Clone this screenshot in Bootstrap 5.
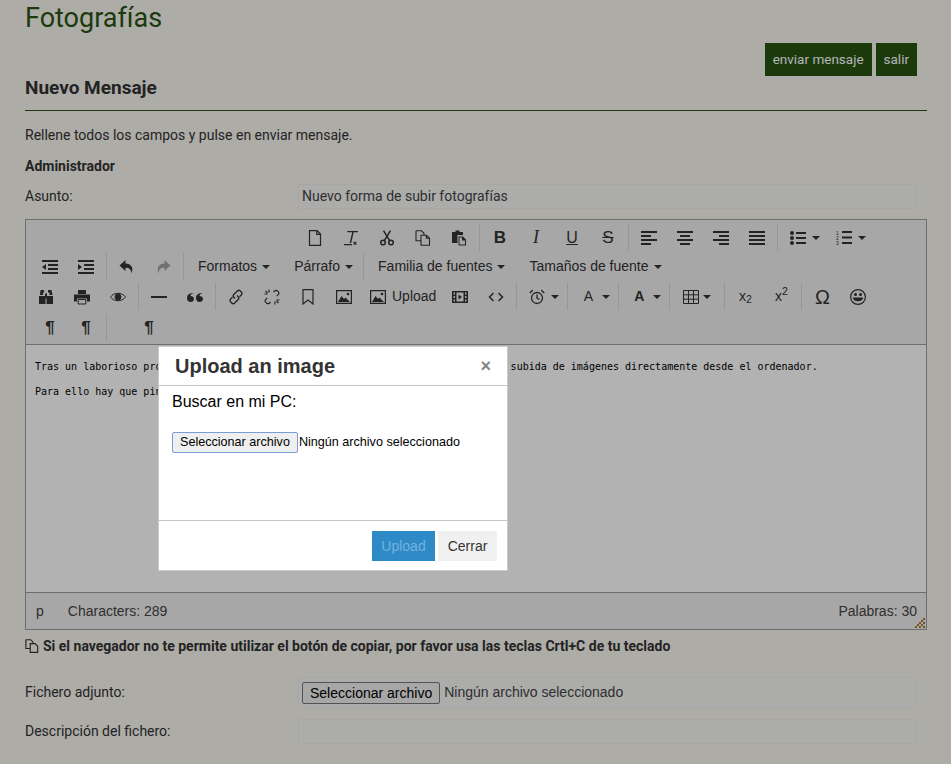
<!DOCTYPE html>
<html lang="es">
<head>
    <meta charset="UTF-8">
    <title>Fotografías | Nuevo Mensaje</title>
    <link href="https://cdn.jsdelivr.net/npm/bootstrap@5.3.2/dist/css/bootstrap.min.css" rel="stylesheet">
    <style>
        html, body { height: 764px; overflow: hidden; }
        body { background: #f8f6f0; font-family: Roboto, sans-serif; font-size: 14px; color: #333; }
        .pagina { padding: 0 24px 0 25px; }
        .titulo { font-size: 27px; font-weight: 400; color: #2a5414; line-height: 36px; margin: 0; }
        .acciones { height: 33px; margin: 7px 10px 0 0; }
        .boton-verde { background: #265412; color: #fff; border: 0; border-radius: 0; font-size: 13.5px; padding: 0 8px; height: 33px; }
        .subtitulo { font-size: 19px; font-weight: 700; line-height: 24px; margin: 0; padding: 0 0 10px; border-bottom: 1px solid #265412; margin-top: 0; }
        .aviso { margin: 14px 0 0; line-height: 20px; }
        .autor { margin: 11px 0 0; line-height: 20px; font-weight: 700; }
        .fila { margin-right: 10px; }
        .fila label { width: 273px; flex: none; }
        .campo { background: #f7f7f5; border: 1px solid #f0f0ee; flex: 1; height: 25px; line-height: 23px; padding: 0 3px; color: #444; }
        .editor { border: 1px solid #9e9e9e; background: #f0f0f0; margin-top: 10px; height: 411px; }
        .barra { height: 124px; padding-top: 4px; }
        .tira { height: 31px; align-items: center; }
        .tira-uno { padding-left: 271px; height: 27px; }
        .tira-dos { height: 30px; padding-top: 1px; }
        .grupo { display: flex; align-items: center; padding: 0 2px; height: 27px; border-left: 1px solid #d9d9d9; }
        .grupo:first-child { border-left: 0; }
        .tira-uno .grupo:first-child { padding-left: 0; }
        .btn-mce { width: 36px; height: 26px; display: flex; align-items: center; justify-content: center; color: #333; flex: none; font-family: "Liberation Sans", sans-serif; font-size: 14px; }
        .btn-mce svg { display: block; }
        .btn-mce.apagado { color: #a3a3a3; }
        .btn-ancho { width: 42px; justify-content: flex-start; padding-left: 8px; }
        .menu-mce { font-family: "Liberation Sans", sans-serif; font-size: 14px; color: #333; padding: 0 8px 0 12px; display: flex; align-items: center; gap: 4px; height: 26px; white-space: nowrap; }
        .flecha { display: inline-block; width: 0; height: 0; border: 4px solid transparent; border-top-color: #333; border-bottom: 0; margin-left: 1px; }
        .flecha-sola { margin-left: -4px; margin-right: 6px; }
        .letra-b { font-weight: 700; font-size: 17px; }
        .letra-i { font-style: italic; font-size: 18px; font-family: "Liberation Serif", serif; }
        .letra-u { font-size: 16px; text-decoration: underline; }
        .letra-s { font-size: 17px; text-decoration: line-through; }
        .area { background: #fff; height: 249px; border-top: 1px solid #9e9e9e; border-bottom: 1px solid #9e9e9e; padding: 15px 9px; font-family: "DejaVu Sans Mono", monospace; font-size: 10px; color: #000; }
        .area p { margin: 0 0 12px; line-height: 13px; }
        .estado { height: 36px; padding: 0 9px 0 10px; font-family: "Liberation Sans", sans-serif; font-size: 14px; color: #444; position: relative; }
        .asa { position: absolute; right: 1px; bottom: 1px; }
        .nota { font-weight: 700; margin: 6px 0 0; line-height: 20px; }
        .fila-fichero { margin-top: 21px; }
        .fila-desc { margin-top: 11px; }
        .fila-desc .campo { height: 25px; }
        .fila-fichero .campo { height: 31px; display: flex; align-items: center; padding: 0 3px; gap: 4px; font-family: "Liberation Sans", sans-serif; font-size: 14px; }
        .archivo { font-family: "Liberation Sans", sans-serif; font-size: 14px; color: #000; background: #efefef; border: 1px solid #767676; border-radius: 2px; height: 22px; padding: 0 7px; line-height: 18px; white-space: nowrap; }
        .capa { position: fixed; inset: 0; background: #000; opacity: .3; }
        .ventana { position: absolute; left: 158px; top: 346px; width: 350px; height: 225px; background: #fff; border: 1px solid #c9c9c9; font-family: "Liberation Sans", sans-serif; color: #000; }
        .ventana-cab { height: 39px; border-bottom: 1px solid #c5c5c5; padding: 0 16px; }
        .ventana-tit { font-size: 20px; font-weight: 700; color: #333; margin: 0; line-height: 39px; }
        .cerrar { font-size: 18px; font-weight: 700; color: #858585; line-height: 1; }
        .ventana-cuerpo { height: 134px; padding: 5px 13px; font-size: 16px; }
        .ventana-cuerpo p { margin: 0 0 16px; line-height: 22px; }
        .archivo-foco { border: 1px solid #7a9cd8; box-shadow: 0 0 0 0 #7a9cd8; font-size: 12.6px; height: 21px; padding: 0 7px; line-height: 17px; }
        .ventana-cuerpo span { font-size: 12.6px; margin-left: 1px; }
        .ventana-pie { border-top: 1px solid #c5c5c5; height: 50px; padding: 10px 10px 0 0; gap: 3px; justify-content: flex-end; }
        .subir { background: #2d8ac7; color: #75b3dc; border: 0; border-radius: 0; height: 30px; width: 63px; font-size: 14px; padding: 0; }
        .volver { background: #f0f0f0; color: #333; border: 0; border-radius: 0; height: 30px; width: 59px; font-size: 14px; padding: 0; }
    </style>
</head>
<body>
<div class="pagina">
    <h1 class="titulo">Fotografías</h1>
    <div class="acciones d-flex justify-content-end gap-1">
        <button class="boton-verde">enviar mensaje</button>
        <button class="boton-verde">salir</button>
    </div>
    <h2 class="subtitulo">Nuevo Mensaje</h2>
    <p class="aviso">Rellene todos los campos y pulse en enviar mensaje.</p>
    <p class="autor">Administrador</p>
    <div class="fila d-flex align-items-center mt-2">
        <label>Asunto:</label>
        <div class="campo">Nuevo forma de subir fotografías</div>
    </div>

    <div class="editor">
        <div class="barra">
            <div class="tira tira-uno d-flex">
                <div class="grupo">
                    <span class="btn-mce"><svg width="16" height="16" viewBox="0 0 16 16" fill="none" stroke="currentColor" stroke-width="1.2"><path d="M2.5 .6h7.5l3.5 3.5v11.300h-11zM9.800 .6v3.700h3.700"/></svg></span>
                    <span class="btn-mce"><svg width="16" height="16" viewBox="0 0 16 16" fill="currentColor"><path d="M4 1h11v1.300h-4.300l-2.500 10.700h-1.500l2.500-10.700h-4.700zM1 14h8v1.300h-8zM11 11.500l1 1 1-1 .8 .8-1 1 1 1-.8 .8-1-1-1 1-.8-.8 1-1-1-1z"/></svg></span>
                    <span class="btn-mce"><svg width="16" height="16" viewBox="0 0 16 16" fill="none" stroke="currentColor" stroke-width="1.500"><circle cx="4" cy="12.500" r="2.300"/><circle cx="12" cy="12.500" r="2.300"/><path d="M5.300 10.600l6.200-10M10.700 10.600l-6.200-10"/></svg></span>
                    <span class="btn-mce"><svg width="16" height="16" viewBox="0 0 16 16" fill="none" stroke="currentColor" stroke-width="1.100"><path d="M1 .8h5.500l2.500 2.500v2M1 .8v10h4.500M6 5.300h5.500l3 3v7h-8.500zM11.300 5.300v3h3.200"/></svg></span>
                    <span class="btn-mce"><svg width="16" height="16" viewBox="0 0 16 16" fill="currentColor"><path d="M1 2h3.500v-1.500h4v1.500h3.500v3h-5.500v8h-5.500z"/><path d="M7.500 6.500h4.500l3 3v6h-7.500zM8.500 7.500v7h5.500v-4h-3v-3z"/></svg></span>
                </div>
                <div class="grupo">
                    <span class="btn-mce letra-b">B</span>
                    <span class="btn-mce letra-i">I</span>
                    <span class="btn-mce letra-u">U</span>
                    <span class="btn-mce letra-s">S</span>
                </div>
                <div class="grupo">
                    <span class="btn-mce"><svg width="16" height="14" viewBox="0 0 16 14" fill="currentColor"><path d="M0 0h16v2h-16zM0 4h10v2h-10zM0 8h16v2h-16zM0 12h10v2h-10z"/></svg></span>
                    <span class="btn-mce"><svg width="16" height="14" viewBox="0 0 16 14" fill="currentColor"><path d="M0 0h16v2h-16zM3 4h10v2h-10zM0 8h16v2h-16zM3 12h10v2h-10z"/></svg></span>
                    <span class="btn-mce"><svg width="16" height="14" viewBox="0 0 16 14" fill="currentColor"><path d="M0 0h16v2h-16zM6 4h10v2h-10zM0 8h16v2h-16zM6 12h10v2h-10z"/></svg></span>
                    <span class="btn-mce"><svg width="16" height="14" viewBox="0 0 16 14" fill="currentColor"><path d="M0 0h16v2h-16zM0 4h16v2h-16zM0 8h16v2h-16zM0 12h16v2h-16z"/></svg></span>
                </div>
                <div class="grupo">
                    <span class="btn-mce"><svg width="16" height="14" viewBox="0 0 16 14" fill="currentColor"><circle cx="2" cy="2" r="2"/><circle cx="2" cy="7" r="2"/><circle cx="2" cy="12" r="2"/><path d="M6 1h10v2h-10zM6 6h10v2h-10zM6 11h10v2h-10z"/></svg></span>
                    <span class="flecha flecha-sola"></span>
                    <span class="btn-mce"><svg width="16" height="15" viewBox="0 0 16 15" fill="currentColor"><path d="M6 1h10v2h-10zM6 6.500h10v2h-10zM6 12h10v2h-10z"/><text x="0" y="4.500" font-size="5" font-family="Liberation Sans">1</text><text x="0" y="9.500" font-size="5" font-family="Liberation Sans">2</text><text x="0" y="14.500" font-size="5" font-family="Liberation Sans">3</text></svg></span>
                    <span class="flecha flecha-sola"></span>
                </div>
            </div>
            <div class="tira tira-dos d-flex">
                <div class="grupo ms-1 border-start-mce">
                    <span class="btn-mce"><svg width="16" height="14" viewBox="0 0 16 14" fill="currentColor"><path d="M0 0h16v2h-16zM6 4h10v2h-10zM6 8h10v2h-10zM0 12h16v2h-16zM4 4v6l-4-3z"/></svg></span>
                    <span class="btn-mce"><svg width="16" height="14" viewBox="0 0 16 14" fill="currentColor"><path d="M0 0h16v2h-16zM6 4h10v2h-10zM6 8h10v2h-10zM0 12h16v2h-16zM0 4v6l4-3z"/></svg></span>
                </div>
                <div class="grupo">
                    <span class="btn-mce"><svg width="16" height="16" viewBox="0 0 16 16" fill="currentColor"><path d="M6.500 1l-6 5.500 6 5.500v-3.200c3.500 0 5.500 1.200 6 5.700 2-5.500 .5-9.500-6-10z"/></svg></span>
                    <span class="btn-mce apagado"><svg width="16" height="16" viewBox="0 0 16 16" fill="currentColor"><path d="M9.500 1l6 5.500-6 5.500v-3.200c-3.500 0-5.500 1.200-6 5.700-2-5.500-.5-9.500 6-10z"/></svg></span>
                </div>
                <div class="grupo">
                    <span class="menu-mce">Formatos <i class="flecha"></i></span>
                    <span class="menu-mce ps-3">Párrafo <i class="flecha"></i></span>
                </div>
                <div class="grupo">
                    <span class="menu-mce">Familia de fuentes <i class="flecha"></i></span>
                    <span class="menu-mce ps-3">Tamaños de fuente <i class="flecha"></i></span>
                </div>
            </div>
            <div class="tira d-flex">
                <div class="grupo">
                    <span class="btn-mce"><svg width="16" height="16" viewBox="0 0 16 16" fill="currentColor"><path d="M2.500 1h3.500v2.500h-1v2.500h-3zM10 1h3.500l1 5h-3v-2.500h-1.500zM1 7h6.500v8h-6.500zM8.500 7h6.500v8h-6.500zM7 4.500h2v5h-2z"/></svg></span>
                    <span class="btn-mce"><svg width="16" height="16" viewBox="0 0 16 16" fill="currentColor"><path d="M4 1h8v4h-8zM0 5.500h16v7h-3v-3h-10v3h-3z"/><path d="M4.200 10.500h7.600v4.500h-7.600z" fill="#f0f0f0" stroke="currentColor"/></svg></span>
                    <span class="btn-mce"><svg width="16" height="16" viewBox="0 0 16 16" fill="none" stroke="currentColor"><path d="M.5 8c3.500-5 11.500-5 15 0-3.500 5-11.500 5-15 0z"/><circle cx="8" cy="8" r="3" fill="currentColor"/></svg></span>
                </div>
                <div class="grupo">
                    <span class="btn-mce"><svg width="16" height="16" viewBox="0 0 16 16" fill="currentColor"><path d="M0 7h16v2h-16z"/></svg></span>
                    <span class="btn-mce"><svg width="16" height="16" viewBox="0 0 16 16" fill="currentColor"><path d="M7 4c-3 .5-3.500 2-3.500 3 2 0 3.500 1 3.500 3s-1.500 3-3.500 3-3.500-1.500-3.500-4c0-3 2-5 7-5zM16 4c-3 .5-3.500 2-3.500 3 2 0 3.500 1 3.500 3s-1.500 3-3.500 3-3.500-1.500-3.500-4c0-3 2-5 7-5z"/></svg></span>
                </div>
                <div class="grupo">
                    <span class="btn-mce"><svg width="16" height="16" viewBox="0 0 16 16" fill="none" stroke="currentColor" stroke-width="1.300"><path d="M7 9.500l-1.200-1.200a2 2 0 0 1 0-2.800l3.500-3.500a2.200 2.200 0 0 1 3 0l1 1a2.200 2.200 0 0 1 0 3l-1.800 1.800"/><path d="M9 6.500l1.200 1.200a2 2 0 0 1 0 2.800l-3.500 3.500a2.200 2.200 0 0 1-3 0l-1-1a2.200 2.200 0 0 1 0-3l1.800-1.800"/></svg></span>
                    <span class="btn-mce"><svg width="16" height="16" viewBox="0 0 16 16" fill="none" stroke="currentColor" stroke-width="1.200"><path d="M9.500 3l1-1a2.200 2.200 0 0 1 3 0l.7 .7a2.200 2.200 0 0 1 0 3l-1.500 1.500M6.500 13l-1 1a2.200 2.200 0 0 1-3 0l-.7-.7a2.200 2.200 0 0 1 0-3l1.500-1.500M5 .5v3M.5 5h3M11 15.500v-3M15.500 11h-3M1.500 2l2 2M14.500 14l-2-2"/></svg></span>
                    <span class="btn-mce"><svg width="12" height="16" viewBox="0 0 12 16" fill="none" stroke="currentColor" stroke-width="1.200"><path d="M1 .6h10v14.400l-5-4-5 4z"/></svg></span>
                    <span class="btn-mce"><svg width="16" height="14" viewBox="0 0 16 14"><path d="M.6 .6h14.800v12.800h-14.800z" fill="none" stroke="currentColor" stroke-width="1.200"/><path d="M2 12l3.500-6 2.500 3 1.500-1.500 4.500 4.500z" fill="currentColor"/><circle cx="12" cy="4" r="1.300" fill="currentColor"/></svg></span>
                    <span class="menu-mce ps-2" style="gap:6px;padding-right:6px"><svg width="16" height="14" viewBox="0 0 16 14"><path d="M.6 .6h14.800v12.800h-14.800z" fill="none" stroke="currentColor" stroke-width="1.200"/><path d="M2 12l3.500-6 2.500 3 1.500-1.500 4.500 4.500z" fill="currentColor"/><circle cx="12" cy="4" r="1.300" fill="currentColor"/></svg>Upload</span>
                    <span class="btn-mce"><svg width="16" height="12" viewBox="0 0 16 12" fill="currentColor"><path d="M0 0h16v12h-16zM1.500 1.500v2h1.500v-2zM1.500 5v2h1.500v-2zM1.500 8.500v2h1.500v-2zM13 1.500v2h1.500v-2zM13 5v2h1.500v-2zM13 8.500v2h1.500v-2zM4.500 1.500v9h7v-9z" fill-rule="evenodd"/><path d="M6.500 3.500l3.500 2.500-3.500 2.500z"/></svg></span>
                    <span class="btn-mce"><svg width="16" height="10" viewBox="0 0 16 10" fill="none" stroke="currentColor" stroke-width="1.500"><path d="M5.500 1l-4 4 4 4M10.500 1l4 4-4 4"/></svg></span>
                </div>
                <div class="grupo">
                    <span class="btn-mce"><svg width="16" height="16" viewBox="0 0 16 16" fill="none" stroke="currentColor" stroke-width="1.300"><circle cx="8" cy="9" r="5.500"/><path d="M8 5.500v3.700l2.500 1.300M.8 4l3-3M15.200 4l-3-3"/></svg></span>
                    <span class="flecha flecha-sola"></span>
                </div>
                <div class="grupo">
                    <span class="btn-mce flex-column letra-a">A<i class="raya"></i></span>
                    <span class="flecha flecha-sola"></span>
                </div>
                <div class="grupo">
                    <span class="btn-mce flex-column letra-a"><b class="fondo-a">A</b><i class="raya"></i></span>
                    <span class="flecha flecha-sola"></span>
                </div>
                <div class="grupo">
                    <span class="btn-mce" style="width:50px;gap:3px"><svg width="16" height="14" viewBox="0 0 16 14" fill="none" stroke="currentColor"><path d="M.5 .5h15v13h-15zM.5 4.800h15M.5 9.200h15M5.500 .5v13M10.500 .5v13"/></svg><i class="flecha"></i></span>
                </div>
                <div class="grupo">
                    <span class="btn-mce">x<sub>2</sub></span>
                    <span class="btn-mce">x<sup>2</sup></span>
                </div>
                <div class="grupo">
                    <span class="btn-mce fs-5">Ω</span>
                    <span class="btn-mce"><svg width="16" height="16" viewBox="0 0 16 16" fill="none" stroke="currentColor" stroke-width="1.200"><circle cx="8" cy="8" r="7.400"/><circle cx="5.500" cy="5.500" r=".9" fill="currentColor"/><circle cx="10.500" cy="5.500" r=".9" fill="currentColor"/><path d="M3.500 9c1 3.500 8 3.500 9 0z" fill="currentColor"/></svg></span>
                </div>
            </div>
            <div class="tira d-flex">
                <div class="grupo ms-1">
                    <span class="btn-mce letra-b">¶</span>
                    <span class="btn-mce letra-b">¶</span>
                </div>
                <div class="grupo ps-4">
                    <span class="btn-mce letra-b">¶</span>
                </div>
            </div>
        </div>
        <div class="area">
            <p>Tras un laborioso proceso de desarrollo ya está disponible en la plataforma la subida de imágenes directamente desde el ordenador.</p>
            <p>Para ello hay que pinchar en el icono de la imagen.</p>
        </div>
        <div class="estado d-flex align-items-center justify-content-between">
            <div class="d-flex gap-4"><span>p</span><span>Characters: 289</span></div>
            <span>Palabras: 30</span>
            <svg class="asa" width="10" height="10" viewBox="0 0 10 10" fill="#a87a30"><path d="M8 0h2v2h-2zM6 2h2v2h-2zM8 4h2v2h-2zM4 4h2v2h-2zM2 6h2v2h-2zM6 6h2v2h-2zM0 8h2v2h-2zM4 8h2v2h-2zM8 8h2v2h-2z"/></svg>
        </div>
    </div>
    <p class="nota d-flex align-items-center gap-1"><svg width="14" height="14" viewBox="0 0 16 16" fill="none" stroke="currentColor" stroke-width="1.300"><path d="M1 .8h5.500l2.500 2.500v2M1 .8v10h4.500M6 5.300h5.500l3 3v7h-8.500z"/></svg>Si el navegador no te permite utilizar el botón de copiar, por favor usa las teclas Crtl+C de tu teclado</p>
    <div class="fila fila-fichero d-flex align-items-center">
        <label>Fichero adjunto:</label>
        <div class="campo"><button class="archivo">Seleccionar archivo</button><span>Ningún archivo seleccionado</span></div>
    </div>
    <div class="fila fila-desc d-flex align-items-center">
        <label>Descripción del fichero:</label>
        <div class="campo"></div>
    </div>
</div>

<div class="capa"></div>
<div class="ventana">
    <div class="ventana-cab d-flex align-items-center justify-content-between">
        <h3 class="ventana-tit">Upload an image</h3>
        <span class="cerrar">×</span>
    </div>
    <div class="ventana-cuerpo">
        <p>Buscar en mi PC:</p>
        <button class="archivo archivo-foco">Seleccionar archivo</button><span>Ningún archivo seleccionado</span>
    </div>
    <div class="ventana-pie d-flex">
        <button class="subir">Upload</button>
        <button class="volver">Cerrar</button>
    </div>
</div>
</body>
</html>
